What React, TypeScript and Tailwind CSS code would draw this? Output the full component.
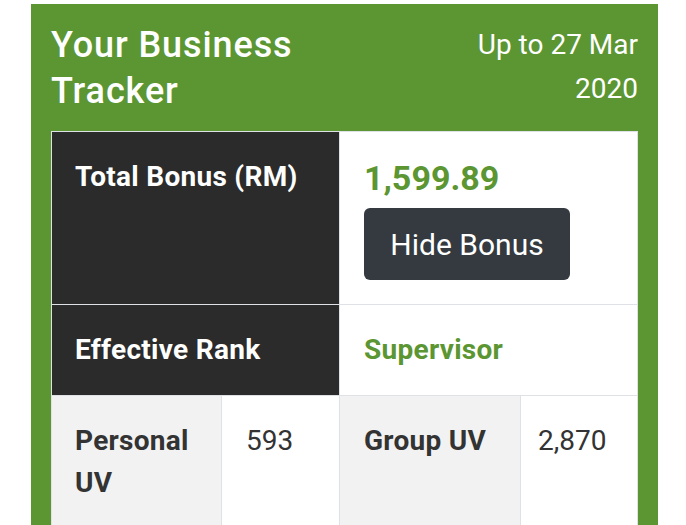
import React from 'react';

const font = { fontFamily: 'Roboto, "Noto Sans", sans-serif' };

export default function App() {
    return (
        <div className="min-h-screen bg-white pt-1 pl-[31px] pr-[28px]" style={font}>
            <div className="bg-[#5b9632] px-5 pt-[18px]">
                <div className="flex items-start justify-between">
                    <h1 className="w-[320px] text-[36px] leading-[46px] font-medium text-white tracking-[0.025em]">
                        Your Business Tracker
                    </h1>
                    <p className="w-[180px] pt-[1px] text-right text-[28px] leading-[44px] text-white">
                        Up to 27 Mar 2020
                    </p>
                </div>

                <div className="mt-[17px] grid grid-cols-[169px_117px_180px_116px] gap-px bg-[#dee2e6] p-px">
                    <div className="col-span-2 bg-[#2b2b2b] pl-[23px] pr-6 py-6 text-[28px] leading-[42px] font-bold tracking-[0.01em] text-white">
                        Total Bonus (RM)
                    </div>
                    <div className="col-span-2 bg-white px-6 py-6">
                        <div className="text-[34px] leading-[44px] font-bold text-[#5b9632]">1,599.89</div>
                        <button className="mt-2 h-[72px] w-[206px] rounded-md bg-[#343a40] text-[30px] text-white">
                            Hide Bonus
                        </button>
                    </div>

                    <div className="col-span-2 bg-[#2b2b2b] pl-[23px] pr-6 py-6 text-[28px] leading-[42px] font-bold tracking-[0.01em] text-white">
                        Effective Rank
                    </div>
                    <div className="col-span-2 bg-white px-6 py-6 text-[28px] leading-[42px] font-bold tracking-[0.01em] text-[#5b9632]">
                        Supervisor
                    </div>

                    <div className="bg-[#f2f2f2] pl-[23px] pr-4 py-6 text-[28px] leading-[42px] font-bold tracking-[0.01em] text-[#333]">
                        Personal UV
                    </div>
                    <div className="bg-white px-6 py-6 text-[28px] leading-[42px] text-[#333]">593</div>
                    <div className="bg-[#f2f2f2] px-6 py-6 text-[28px] leading-[42px] font-bold tracking-[0.01em] text-[#333]">
                        Group UV
                    </div>
                    <div className="bg-white px-[17px] py-6 text-[28px] leading-[42px] text-[#333]">2,870</div>
                </div>
            </div>
        </div>
    );
}
